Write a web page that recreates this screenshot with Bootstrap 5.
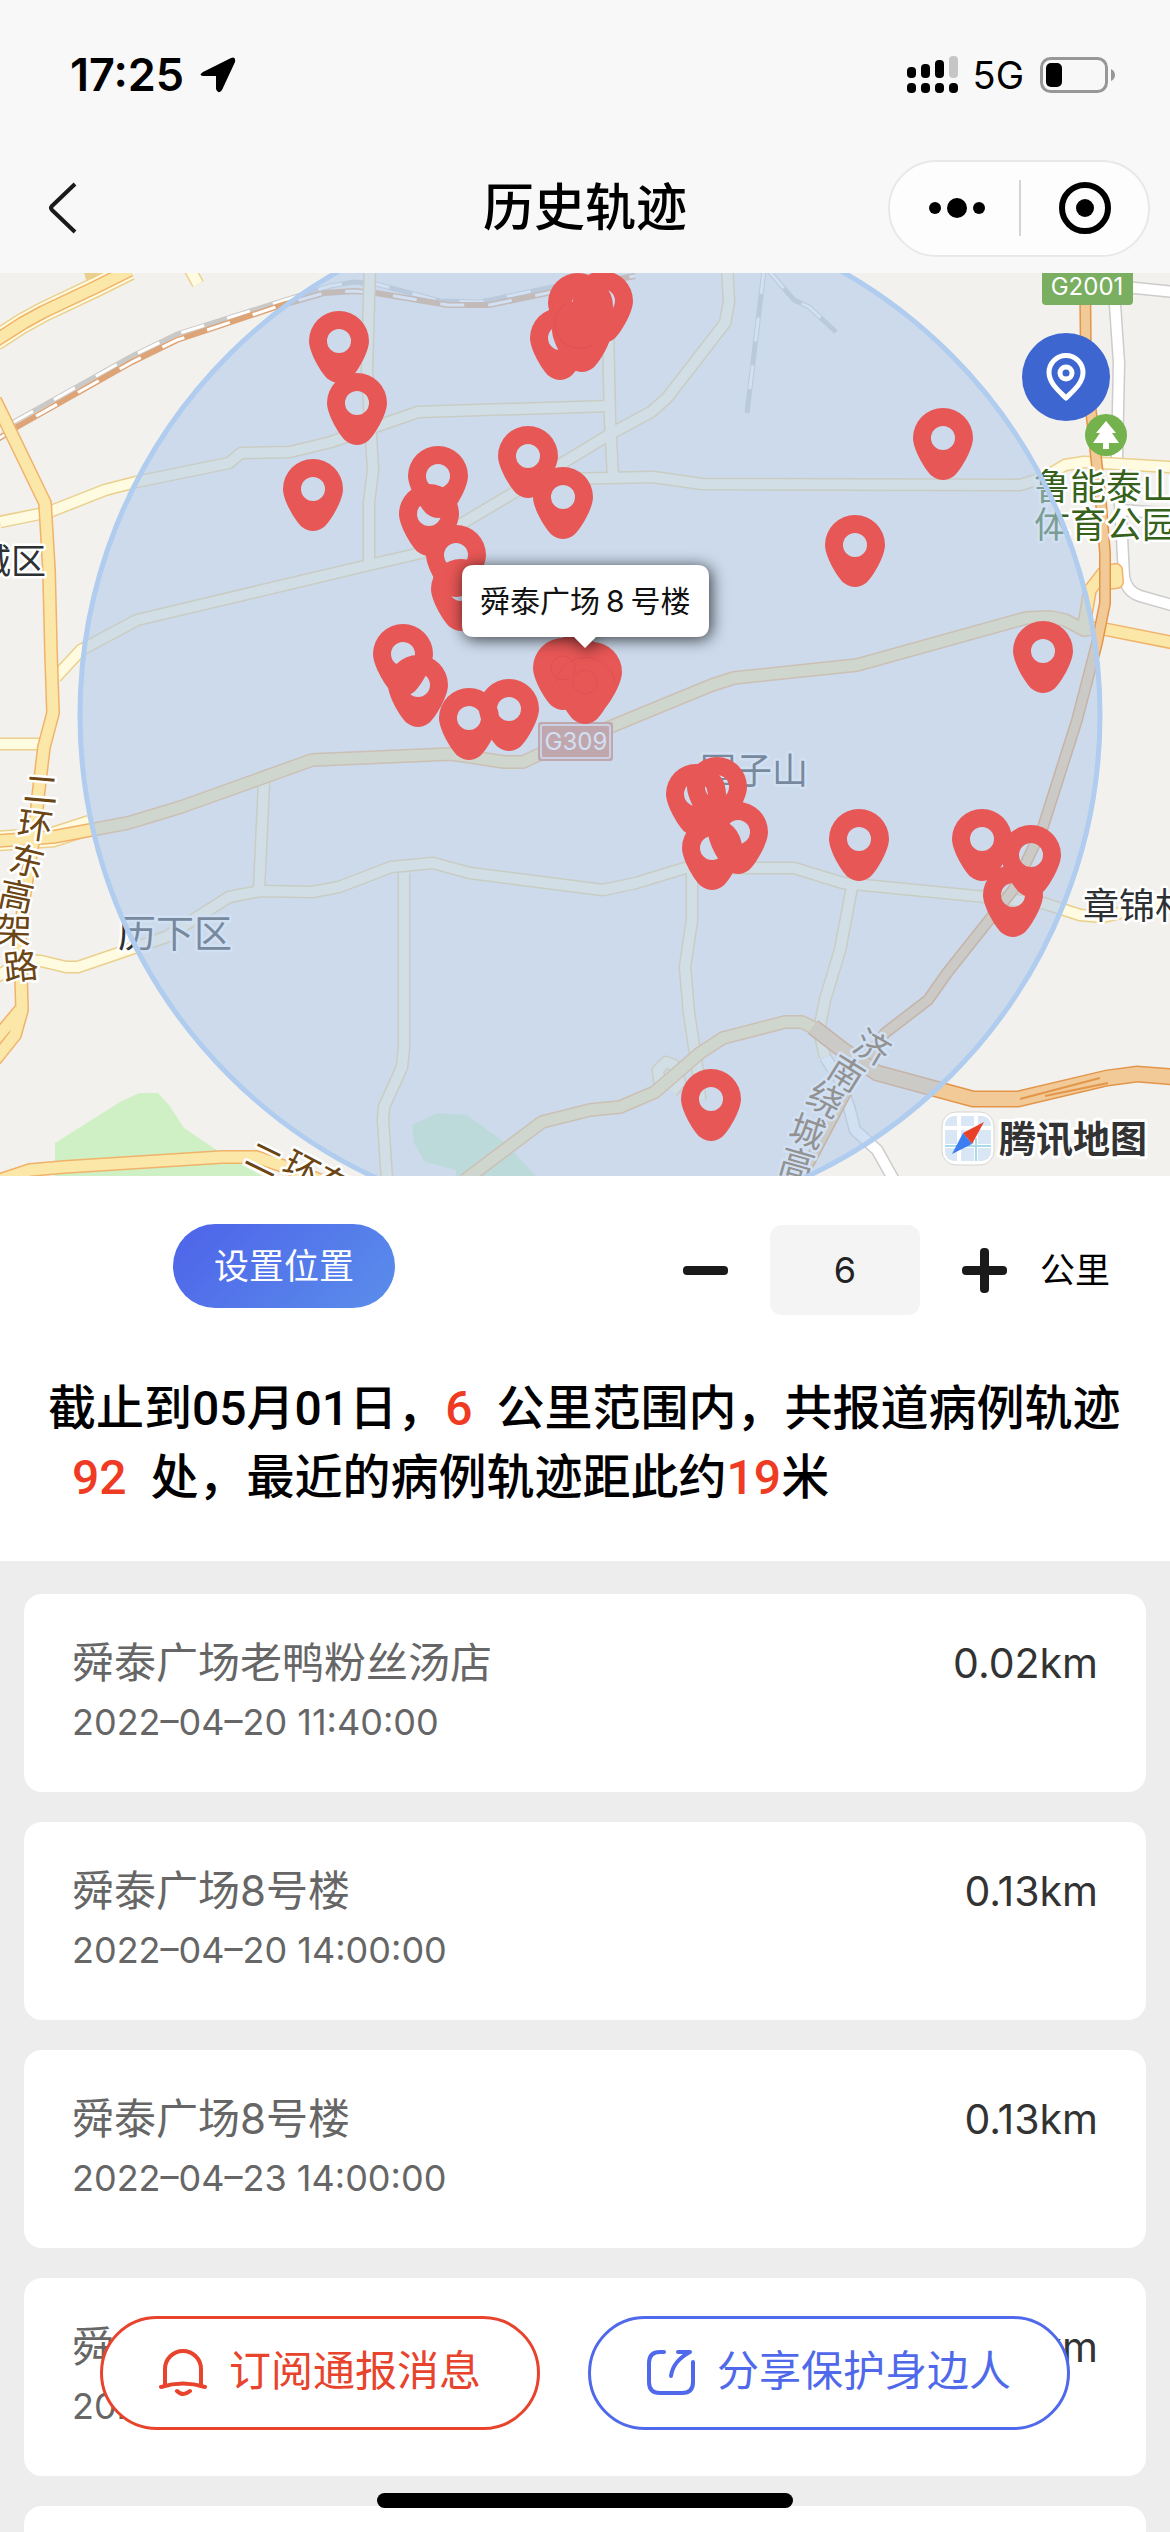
<!DOCTYPE html>
<html lang="zh-CN">
<head>
<meta charset="utf-8">
<meta name="viewport" content="width=device-width, initial-scale=1">
<title>历史轨迹</title>
<link rel="stylesheet" href="https://cdn.jsdelivr.net/npm/bootstrap@5.3.0/dist/css/bootstrap.min.css">
<script src="https://cdn.jsdelivr.net/npm/bootstrap@5.3.0/dist/js/bootstrap.bundle.min.js"></script>
<style>
  body { font-family: Inter, "Noto Sans CJK SC", sans-serif; font-size: 35px; color: #000; background: #ededed; }
  .app { height: 100vh; }
  .topbar { background: #f8f8f8; }
  .status { height: 143px; padding: 6px 54px 0 70px; }
  .clock { font-size: 45px; font-weight: 600; }
  .network { font-size: 38px; line-height: 1; margin: 0 16px 0 14px; }
  .titlebar { height: 130px; padding: 0 20px; }
  .titlebar > * { flex: 1 1 0; }
  .page-title { font-size: 51px; font-weight: 500; }
  .back { margin-left: 20px; }
  .capsule { width: 262px; height: 97px; border: 2px solid #e8e8e8; border-radius: 49px; background: #fdfdfd; }
  .capsule .btn { width: 50%; height: 56px; }
  .capsule .btn + .btn { border-left: 2px solid #d4d4d4; }
  .map svg.canvas { width: 100%; height: auto; }
  .map text { font-family: Inter, "Noto Sans CJK SC", sans-serif; }
  .locate { top: 60px; right: 60px; width: 88px; height: 88px; background: #3e66d1; }
  .panel { padding: 49px 36px 49px 48px; }
  .controls { height: 90px; padding: 0 24px 0 125px; margin-bottom: 59px; }
  .set-btn { width: 222px; height: 84px; font-size: 35px; color: #fff; background: linear-gradient(135deg, #4e63ea, #5a8eea); }
  .amount { width: 150px; height: 90px; border-radius: 12px; background: #f4f4f4; font-size: 36px; color: #222; margin: 0 42px; }
  .step { width: 45px; height: 45px; }
  .unit { margin-left: 33px; }
  .summary { font-family: Roboto, "Noto Sans CJK SC", sans-serif; font-size: 48px; line-height: 69px; font-weight: 500; }
  .hot { color: #ef3b24; }
  .places { padding: 33px 24px; gap: 30px; }
  .place { height: 198px; border-radius: 18px; padding: 40px 48px; }
  .place-name { font-size: 42px; line-height: 58px; color: #666; }
  .place-time { font-size: 36px; line-height: 60px; color: #666; }
  .place-far { font-size: 41px; line-height: 58px; color: #333; }
  .floaters { bottom: 102px; padding: 0 100px; gap: 48px; }
  .pill { height: 114px; padding: 0 56px; gap: 22px; border: 3px solid; font-size: 42px; background: #fff; }
  .pill span { padding-bottom: 6px; }
  .pill.red { color: #e8432c; border-color: #e8432c; }
  .pill.blue { color: #4f69ea; border-color: #4f69ea; }
  .home-bar { bottom: 24px; width: 416px; height: 15px; background: #000; }
</style>
</head>
<body>
<div class="app position-relative overflow-hidden d-flex flex-column">

  <header class="topbar flex-shrink-0">
    <div class="status d-flex align-items-center justify-content-between">
      <div class="d-flex align-items-center gap-3">
        <span class="clock">17:25</span>
        <svg width="36" height="36" viewBox="0 0 36 36" aria-hidden="true"><path d="M3 15 31 1Q36-1 35 5L22 33Q18 38 16 32V19H3Q-2 18 3 15Z"/></svg>
      </div>
      <div class="d-flex align-items-center">
        <svg width="52" height="38" viewBox="0 0 52 38" aria-hidden="true">
          <rect y="11" width="9" height="11" rx="4"/><rect x="14" y="8" width="9" height="14" rx="4"/><rect x="28" y="4" width="9" height="18" rx="4"/><rect x="42" width="9" height="22" rx="4" fill="#c6c6c6"/>
          <rect y="27" width="9" height="10" rx="4"/><rect x="14" y="27" width="9" height="10" rx="4"/><rect x="28" y="27" width="9" height="10" rx="4"/><rect x="42" y="27" width="9" height="10" rx="4"/>
        </svg>
        <span class="network">5G</span>
        <svg width="76" height="36" viewBox="0 0 76 36" aria-hidden="true"><rect x="1.500" y="1.500" width="65" height="33" rx="9" fill="none" stroke="#979797" stroke-width="3"/><rect x="6" y="6" width="16" height="24" rx="5"/><path d="M71 12Q75 14 75 18T71 24Z" fill="#979797"/></svg>
      </div>
    </div>
    <div class="titlebar d-flex align-items-center">
      <div><button class="back btn p-0 border-0 d-flex" aria-label="返回"><svg width="44" height="54" viewBox="0 0 44 54"><path d="M35 3 12 25Q10 27 12 29L35 51" fill="none" stroke="#1a1a1a" stroke-width="4"/></svg></button></div>
      <h1 class="page-title text-center m-0">历史轨迹</h1>
      <div class="d-flex justify-content-end">
        <div class="capsule d-flex align-items-center">
          <button class="btn p-0 ps-1 border-0 d-flex align-items-center justify-content-center" aria-label="更多"><svg width="58" height="22" viewBox="0 0 58 22"><circle cx="7" cy="11" r="6"/><circle cx="29" cy="11" r="10"/><circle cx="51" cy="11" r="6"/></svg></button>
          <button class="btn p-0 rounded-0 border-top-0 border-end-0 border-bottom-0 d-flex align-items-center justify-content-center" aria-label="关闭"><svg width="54" height="54" viewBox="0 0 54 54"><circle cx="27" cy="27" r="23" fill="none" stroke="#000" stroke-width="6"/><circle cx="27" cy="27" r="9"/></svg></button>
        </div>
      </div>
    </div>
  </header>

  <section class="map position-relative flex-shrink-0">
    <svg class="canvas d-block" viewBox="0 273 1170 903" role="img" aria-label="地图">
      <defs>
        <path id="pin" fill-rule="evenodd" d="M-30 0A30 30 0 0 1 30 0C30 12 17 33 11 38Q0 46-11 38C-17 33-30 12-30 0ZM-12 0A12 12 0 1 0 12 0 12 12 0 1 0-12 0Z"/>
        <g id="minor" fill="none" stroke-linejoin="round">
          <path d="M186 262 198 284M0 522 49 512 105 490 136 482 229 463 241 453 290 452 331 442 418 412 609 406"/>
          <path d="M370 265 367 370 373 470 369 503V565"/>
          <path d="M56 677 81 650 137 620 369 565 421 553 463 523 515 492 612 433 651 412 667 398 725 323 729 302 727 265"/>
          <path d="M608 330 610 420 613 478M560 479 653 477 702 484 1020 485 1043 478 1065 465 1084 462 1170 467"/>
          <path d="M0 744H46M264 782 259 890"/>
          <path d="M-5 978 23 960 41 961 66 967 78 967 166 937 196 918 229 897 260 891 312 892 339 887 391 867 433 863 470 873 603 890 636 883 685 868 794 868 843 883 986 897 1043 903 1080 915 1103 917 1175 900"/>
          <path d="M404 873V1047L402 1067 384 1107 383 1120 387 1180"/>
          <path d="M692 868V920L685 967 689 1013 698 1073 700 1100M852 887 840 950 825 1000 819 1030 825 1057"/>
          <path d="M660 1088 658 1070 666 1062 674 1065 680 1082 672 1092"/>
        </g>
        <g id="major" fill="none" stroke-linejoin="round">
          <path d="M-5 341 23 323 43 312 96 287 130 270"/>
          <path d="M-5 400 0 410 45 503 49 570 51 653 53 713 44 747 38 797 35 830 25 890 20 940 22 1010 15 1035-5 1060"/>
          <path d="M1175 643 1099 628 1084 630 1065 620 1050 617 1026 618 857 665 734 678 712 685 610 727 538 755 523 762 504 762 451 754 312 760 181 807 128 823 53 837-5 841"/>
          <path d="M465 1180 542 1122 590 1110 620 1107 655 1092 700 1053 723 1038 785 1022 802 1022 816 1029"/>
          <path d="M0 1180 30 1170 64 1167 222 1157 256 1157 286 1167 330 1184"/>
          <path d="M20 1010-5 1040M1084 625 1090 590 1104 572 1116 570 1117 582 1108 583"/>
        </g>
        <g id="express" fill="none" stroke-linejoin="round">
          <path d="M1085 270 1086 370 1092 420 1101 503 1105 553 1105 603 1097 643 1077 720 1043 827 1013 890 947 973 928 1000 885 1033 858 1070 800 1180"/>
        </g>
        <g id="lane" fill="none" stroke-linejoin="round">
          <path d="M1114 290 1119 363 1117 457 1122 537 1124 577Q1127 592 1140 596L1175 606M1125 287 1175 292M1120 510 1175 514M825 1057 840 1080 849 1107 855 1130 877 1150 895 1182"/>
        </g>
        <path id="rail" fill="none" d="M-5 441 15 428 132 362 177 340 282 305 324 293 354 291 376 293 448 305 489 305 557 291 635 276"/>
        <path id="siding" fill="none" d="M12 423 132 356 177 334 282 301 330 286 354 282 376 284 440 301 480 302 557 286M764 270 747 413M768 270 794 300 809 307 836 332"/>
      </defs>

      <rect y="273" width="1170" height="903" fill="#f2f1ed"/>
      <path fill="#cff0c5" d="M55 1143 120 1102 139 1093H158L169 1105 184 1128 218 1151 262 1176H55ZM412 1125 438 1113 467 1115 504 1142 536 1176H456V1170L425 1162 414 1143Z"/>
      <use href="#siding" stroke="#c9c9c7" stroke-width="5"/><use href="#siding" stroke="#fff" stroke-width="3" stroke-dasharray="24 24"/>
      <use href="#rail" stroke="#dda478" stroke-width="6"/><use href="#rail" stroke="#fff" stroke-width="3" stroke-dasharray="24 24"/>
      <use href="#lane" stroke="#ccc" stroke-width="13"/><use href="#lane" stroke="#fff" stroke-width="10"/>
      <use href="#minor" stroke="#ebd08d" stroke-width="13"/><use href="#minor" stroke="#fefbe1" stroke-width="10"/>
      <path d="M92 262 98 284M-5 341 23 323 43 312 96 287 130 270M-5 841 53 837 90 825" fill="none" stroke="#ebd08d" stroke-width="21"/><path d="M-5 341 23 323 43 312 96 287 130 270M-5 841 53 837 90 825" fill="none" stroke="#fefbe1" stroke-width="18"/>
      <use href="#major" stroke="#f1b269" stroke-width="14"/><use href="#major" stroke="#fbe7a8" stroke-width="11"/>
      <use href="#express" stroke="#e3954a" stroke-width="12"/><use href="#express" stroke="#f1ca97" stroke-width="9"/>
      <path d="M813 1027 843 1050 877 1073 973 1099 1018 1099 1107 1078 1137 1074 1175 1077" fill="none" stroke="#e3954a" stroke-width="17"/>
      <path d="M813 1027 843 1050 877 1073 973 1099 1018 1099 1107 1078 1137 1074 1175 1077" fill="none" stroke="#f1ca97" stroke-width="14"/>
      <path d="M1020 1099 1100 1078M1045 1096 1108 1083" fill="none" stroke="#e3954a" stroke-width="2"/>

      <g font-size="36" fill="#2e3134" stroke="#fff" stroke-width="5" stroke-linejoin="round" paint-order="stroke">
        <text x="46" y="574" font-size="35" text-anchor="end">城区</text>
        <text x="118" y="947" font-size="38">历下区</text>
        <text x="700" y="784">围子山</text>
        <text x="1083" y="919">章锦村</text>
        <g fill="#35611a"><text x="1034" y="500">鲁能泰山</text><text x="1034" y="538">体育公园</text></g>
        <g fill="#6b4513" font-size="35" text-anchor="middle">
          <text transform="translate(41 790) rotate(5)" y="12">二</text>
          <text transform="translate(35 826) rotate(8)" y="12">环</text>
          <text transform="translate(27 862) rotate(14)" y="12">东</text>
          <text transform="translate(16 897) rotate(12)" y="12">高</text>
          <text transform="translate(14 931) rotate(2)" y="12">架</text>
          <text transform="translate(21 967) rotate(-6)" y="12">路</text>
          <text transform="translate(264 1160) rotate(26)" y="12">二</text>
          <text transform="translate(301 1169) rotate(28)" y="12">环</text>
          <text transform="translate(333 1184) rotate(28)" y="12">东</text>
          <text transform="translate(872 1048) rotate(30)" y="12">济</text>
          <text transform="translate(846 1074) rotate(32)" y="12">南</text>
          <text transform="translate(825 1100) rotate(28)" y="12">绕</text>
          <text transform="translate(807 1132) rotate(20)" y="12">城</text>
          <text transform="translate(797 1165) rotate(16)" y="12">高</text>
        </g>
      </g>
      <rect x="538" y="722" width="75" height="39" rx="3" fill="#d7755a"/><rect x="541" y="725" width="69" height="33" rx="2" fill="none" stroke="#f0dcd8" stroke-width="2"/>
      <text x="576" y="750" font-size="24" fill="#fff" text-anchor="middle">G309</text>

      <circle cx="590" cy="715" r="510" fill="#afc9ea" fill-opacity=".58" stroke="#b0ccef" stroke-width="5"/>

      <rect x="1042" y="262" width="91" height="43" rx="4" fill="#7aae60"/><text x="1087" y="295" font-size="24" fill="#fff" text-anchor="middle">G2001</text>
      <circle cx="1106" cy="435" r="21" fill="#73b24c"/><path fill="#fff" d="M1106 421 1116 433H1112L1119 443H1109V449H1103V443H1093L1100 433H1096Z"/>

      <g fill="#e75756">
        <use href="#pin" x="339" y="341"/><use href="#pin" x="357" y="403"/><use href="#pin" x="313" y="489"/><use href="#pin" x="438" y="476"/>
        <use href="#pin" x="429" y="514"/><use href="#pin" x="528" y="456"/><use href="#pin" x="563" y="497"/><use href="#pin" x="456" y="555"/>
        <use href="#pin" x="461" y="589"/><use href="#pin" x="403" y="654"/><use href="#pin" x="418" y="685"/><use href="#pin" x="469" y="718"/>
        <use href="#pin" x="509" y="709"/><use href="#pin" x="560" y="338"/><use href="#pin" x="582" y="330"/><use href="#pin" x="578" y="303"/>
        <use href="#pin" x="603" y="301"/><use href="#pin" x="583" y="306"/>
        <use href="#pin" x="563" y="668"/><use href="#pin" x="592" y="672"/><use href="#pin" x="585" y="682"/><use href="#pin" x="575" y="665"/>
        <use href="#pin" x="943" y="438"/><use href="#pin" x="855" y="545"/><use href="#pin" x="1043" y="651"/><use href="#pin" x="859" y="839"/>
        <use href="#pin" x="982" y="839"/><use href="#pin" x="1031" y="855"/><use href="#pin" x="1013" y="895"/><use href="#pin" x="711" y="1099"/>
        <use href="#pin" x="712" y="848"/><use href="#pin" x="738" y="832"/><use href="#pin" x="717" y="787"/><use href="#pin" x="696" y="794"/>
        <ellipse cx="716" cy="788" rx="9" ry="12"/><circle cx="576" cy="674" r="26"/>
      </g>
      <g fill="none" stroke="#d94e4f" stroke-width="1" opacity=".6"><circle cx="563" cy="668" r="12"/><circle cx="585" cy="682" r="12"/><path d="M556 682A30 30 0 0 1 615 682M567 303A24 24 0 0 0 592 345"/></g>

      <g>
        <path d="M474 565H697Q709 565 709 577V625Q709 637 697 637H596L585 648 574 637H474Q462 637 462 625V577Q462 565 474 565Z" fill="#fff" style="filter:drop-shadow(2px 2px 8px rgba(0,0,0,.75))"/>
        <text x="480" y="612" font-size="30" fill="#111">舜泰广场<tspan dx="6">8</tspan><tspan dx="6">号楼</tspan></text>
      </g>

      <g>
        <rect x="942" y="1112" width="52" height="53" rx="14" fill="#fff" stroke="#d5d5d3" stroke-width="1"/>
        <rect x="945" y="1116" width="46" height="45" rx="9" fill="#d9e6f6"/><path d="M945 1128H991M945 1146H991M959 1116V1161M976 1116V1161" stroke="#fff" stroke-width="4" fill="none"/><path d="M945 1146H991M976 1138V1161" stroke="#a9dbe8" stroke-width="2"/>
        <path d="M984 1122 963 1133 972 1144Z" fill="#e9402a"/><path d="M952 1154 963 1133 972 1144Z" fill="#3d7df2"/>
        <text x="999" y="1153" font-size="37" font-weight="700" fill="#333" stroke="#fff" stroke-width="6" stroke-linejoin="round" paint-order="stroke">腾讯地图</text>
      </g>
    </svg>
    <button class="locate btn rounded-circle position-absolute p-0 border-0 d-flex align-items-center justify-content-center" aria-label="定位">
      <svg width="42" height="50" viewBox="0 0 42 50" fill="none" stroke="#fff" stroke-width="5"><path d="M21 46C14 39 4 31 4 20.500A17 17 0 0 1 38 20.500C38 31 28 39 21 46Z" stroke-linejoin="round"/><circle cx="21" cy="21" r="6"/></svg>
    </button>
  </section>

  <section class="panel bg-white flex-shrink-0">
    <div class="controls d-flex align-items-center">
      <button class="set-btn btn rounded-pill border-0 p-0 mb-2 me-auto">设置位置</button>
      <button class="step btn p-0 border-0 d-flex" aria-label="减少"><svg width="45" height="45" viewBox="0 0 45 45"><rect y="18" width="45" height="9" rx="4" fill="#1a1a1a"/></svg></button>
      <input class="amount form-control border-0 text-center p-0" type="text" value="6" aria-label="公里数">
      <button class="step btn p-0 border-0 d-flex" aria-label="增加"><svg width="45" height="45" viewBox="0 0 45 45" fill="#1a1a1a"><rect y="18" width="45" height="9" rx="4"/><rect x="18" width="9" height="45" rx="4"/></svg></button>
      <span class="unit">公里</span>
    </div>
    <p class="summary m-0">截止到05月01日，<span class="hot me-4">6</span>公里范围内，共报道病例轨迹<span class="hot mx-4">92</span>处，最近的病例轨迹距此约<span class="hot">19</span>米</p>
  </section>

  <ul class="places list-unstyled d-flex flex-column m-0">
    <li class="place bg-white flex-shrink-0 d-flex justify-content-between">
      <div><div class="place-name">舜泰广场老鸭粉丝汤店</div><div class="place-time">2022–04–20 11:40:00</div></div><div class="place-far">0.02km</div>
    </li>
    <li class="place bg-white flex-shrink-0 d-flex justify-content-between">
      <div><div class="place-name">舜泰广场8号楼</div><div class="place-time">2022–04–20 14:00:00</div></div><div class="place-far">0.13km</div>
    </li>
    <li class="place bg-white flex-shrink-0 d-flex justify-content-between">
      <div><div class="place-name">舜泰广场8号楼</div><div class="place-time">2022–04–23 14:00:00</div></div><div class="place-far">0.13km</div>
    </li>
    <li class="place bg-white flex-shrink-0 d-flex justify-content-between">
      <div><div class="place-name">舜</div><div class="place-time">202</div></div><div class="place-far">km</div>
    </li>
    <li class="place bg-white flex-shrink-0"></li>
  </ul>

  <div class="floaters position-absolute start-0 end-0 d-flex">
    <button class="pill red btn rounded-pill d-flex align-items-center text-nowrap">
      <svg width="48" height="50" viewBox="0 0 48 50" fill="none" stroke="currentColor" stroke-width="4" stroke-linecap="round" aria-hidden="true"><path d="M6 37V21A18 18 0 0 1 42 21V37"/><path d="M2 39Q24 32 46 39M18 43Q24 49 31 43"/></svg>
      <span>订阅通报消息</span>
    </button>
    <button class="pill blue btn rounded-pill d-flex align-items-center text-nowrap">
      <svg width="48" height="50" viewBox="0 0 48 50" fill="none" stroke="currentColor" stroke-width="4" stroke-linecap="round" stroke-linejoin="round" aria-hidden="true"><path d="M17 4H13Q2 4 2 15V34Q2 45 13 45H35Q46 45 46 34V14"/><path d="M31 4H43Q26 13 24 28"/></svg>
      <span>分享保护身边人</span>
    </button>
  </div>
  <div class="home-bar position-absolute start-50 translate-middle-x rounded-pill"></div>
</div>
</body>
</html>
